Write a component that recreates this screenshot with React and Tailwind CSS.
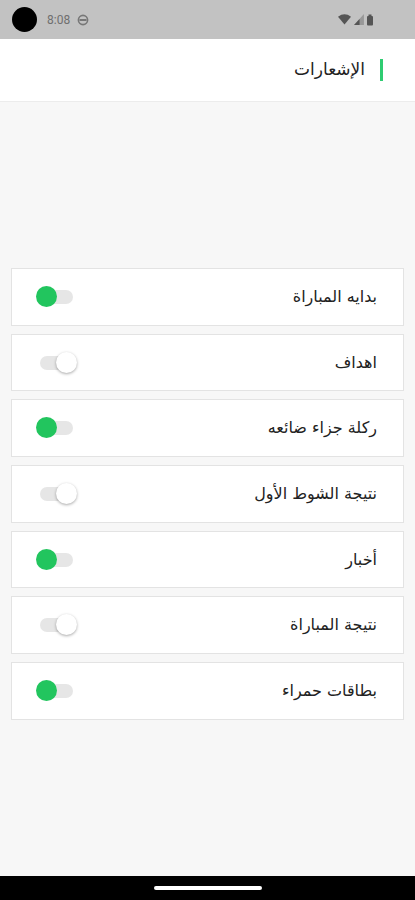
const items = [
  { label: 'بدايه المباراة', on: true },
  { label: 'اهداف', on: false },
  { label: 'ركلة جزاء ضائعه', on: true },
  { label: 'نتيجة الشوط الأول', on: false },
  { label: 'أخبار', on: true },
  { label: 'نتيجة المباراة', on: false },
  { label: 'بطاقات حمراء', on: true },
]

function Toggle({ on }) {
  return (
    <div className="relative flex h-[22px] w-[41px] items-center">
      <div className="mx-[4px] h-[14px] w-[33px] rounded-full bg-[#e6e6e6]" />
      {on ? (
        <div className="absolute left-0 top-0 h-[21px] w-[21px] rounded-full bg-[#22c55e]" />
      ) : (
        <div className="absolute right-0 top-0 h-[21px] w-[21px] rounded-full bg-white shadow-[0_1px_3px_rgba(0,0,0,0.35)]" />
      )}
    </div>
  )
}

export default function App() {
  return (
    <div className="flex h-[900px] w-[415px] flex-col overflow-hidden bg-[#f7f7f7] font-['DejaVu_Sans',sans-serif]">
      {/* status bar */}
      <div className="flex h-[39px] items-center justify-between bg-[#c2c2c2] pl-[12px] pr-[42px]">
        <div className="flex items-center">
          <div className="h-[25px] w-[25px] rounded-full bg-black" />
          <span className="ml-[10px] text-[12px] text-[#6f6f6f]" style={{ fontFamily: 'Roboto, sans-serif' }}>8:08</span>
          <svg className="ml-[7px]" width="12" height="12" viewBox="0 0 12 12">
            <circle cx="6" cy="6" r="4.6" fill="none" stroke="#777" strokeWidth="1.6" />
            <rect x="2.5" y="5" width="7" height="2" fill="#777" />
          </svg>
        </div>
        <div className="flex items-center gap-[3px]">
          <svg width="13" height="11" viewBox="0 0 12 10">
            <path d="M0 2.5 Q6 -2 12 2.5 L6 9.5 Z" fill="#555" />
          </svg>
          <svg width="10" height="11" viewBox="0 0 9 10">
            <path d="M9 0 L9 10 L0 10 Z" fill="#666" opacity="0.45" />
            <path d="M5 4.5 L5 10 L0 10 Z" fill="#555" />
          </svg>
          <svg width="6" height="12" viewBox="0 0 6 11">
            <rect x="1.5" y="0" width="3" height="1.5" fill="#555" />
            <rect x="0" y="1.5" width="6" height="9.5" rx="1" fill="#555" />
          </svg>
        </div>
      </div>

      {/* header */}
      <div dir="rtl" className="flex h-[63px] items-center border-b border-[#ececec] bg-white pr-[32px]">
        <div className="h-[22px] w-[3px] bg-[#2ecc71]" />
        <h1 className="mr-[15px] text-[17px] text-[#222]">الإشعارات</h1>
      </div>

      {/* list */}
      <div className="flex flex-1 flex-col gap-[8px] px-[11px] pt-[166px]">
        {items.map((it) => (
          <div
            key={it.label}
            dir="rtl"
            className="flex h-[57.7px] items-center justify-between border border-[#e3e3e3] bg-white pl-[24px] pr-[26px]"
          >
            <span className="text-[16px] text-[#222]">{it.label}</span>
            <Toggle on={it.on} />
          </div>
        ))}
      </div>

      {/* nav bar */}
      <div className="flex h-[24px] items-center justify-center bg-black">
        <div className="h-[4px] w-[108px] rounded-full bg-white" />
      </div>
    </div>
  )
}
